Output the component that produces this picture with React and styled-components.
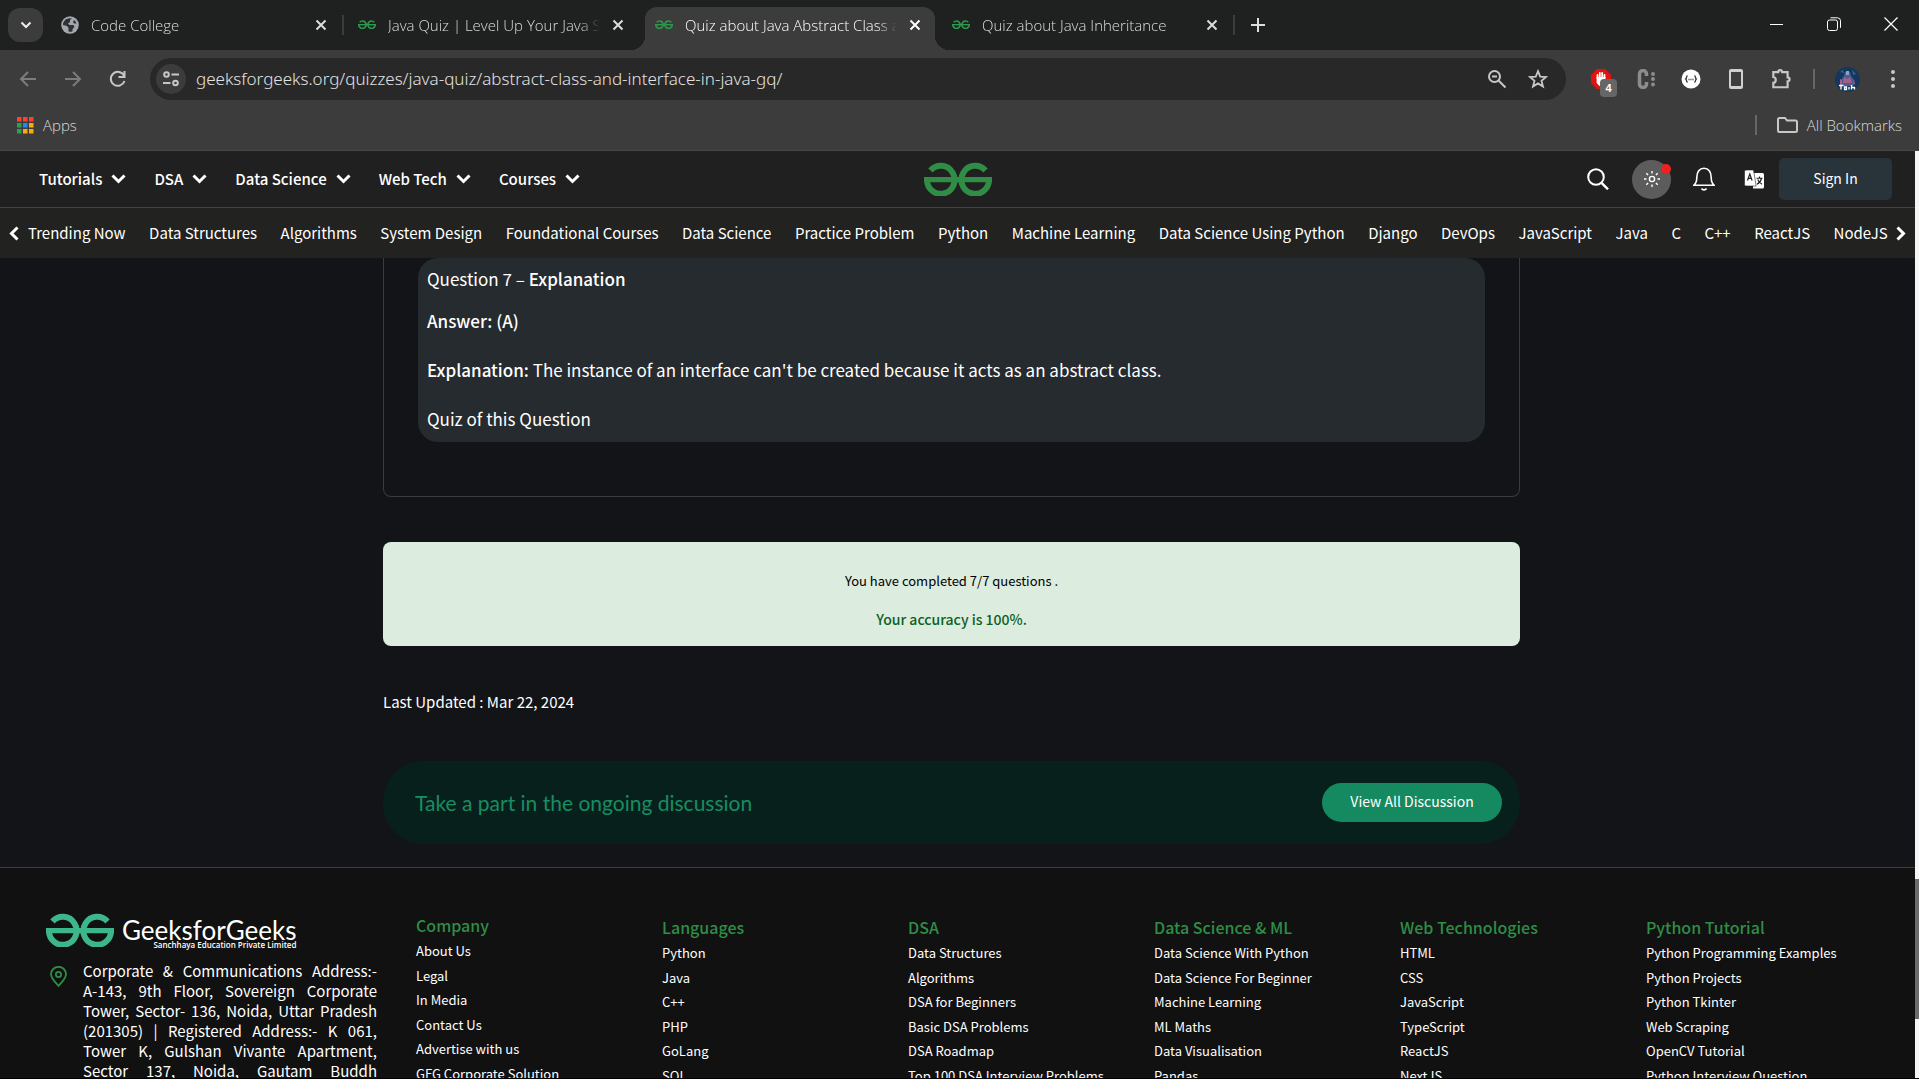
import React from "react";
import styled, { createGlobalStyle, css } from "styled-components";

const uiFont = `"Open Sans", "Noto Sans", sans-serif`;
const siteFont = `"Noto Sans CJK SC", "Noto Sans", sans-serif`;

const GlobalStyle = createGlobalStyle`
  *, *::before, *::after { box-sizing: border-box; }
  body { margin: 0; background: #131418; overflow: hidden; }
  button { border: 0; padding: 0; background: none; color: inherit; font: inherit; cursor: pointer; }
  a { color: inherit; text-decoration: none; }
  h2, p, ul { margin: 0; padding: 0; }
  ul { list-style: none; }
  svg { display: block; flex: none; }
`;

/* ---------- browser chrome ---------- */

const Window = styled.div`
  display: flex;
  flex-direction: column;
  height: 100vh;
  overflow: hidden;
  border-bottom: 1px solid #000;
  font-family: ${siteFont};
`;

const TabStrip = styled.div`
  display: flex;
  flex: none;
  height: 50px;
  padding-left: 8px;
  background: #1f2120;
  color: #dcdcdc;
  font: 300 15px/20px ${uiFont};
`;

const TabSearch = styled.button`
  display: grid;
  place-items: center;
  width: 35px;
  height: 34px;
  margin: 8px 8px 0 0;
  border-radius: 12px;
  background: #3c3c3c;
`;

const TabItem = styled.div`
  position: relative;
  display: flex;
  align-items: center;
  width: 290px;
  height: 43px;
  margin: 7px 7px 0 0;
  padding: 0 14px 8px 10px;
  border-radius: 12px 12px 0 0;
  ${(p) =>
    p.$active &&
    css`
      background: #3c3c3c;
      color: #fff;
      &::before,
      &::after {
        content: "";
        position: absolute;
        bottom: 0;
        width: 14px;
        height: 14px;
      }
      &::before {
        right: 100%;
        background: radial-gradient(circle at 0 0, transparent 14px, #3c3c3c 14px);
      }
      &::after {
        left: 100%;
        background: radial-gradient(circle at 100% 0, transparent 14px, #3c3c3c 14px);
      }
    `}
`;

const TabTitle = styled.span`
  flex: 1;
  margin: 0 12px;
  overflow: hidden;
  white-space: nowrap;
  mask-image: linear-gradient(90deg, #000 calc(100% - 20px), transparent);
`;

const Divider = styled.span`
  flex: none;
  align-self: center;
  width: 2px;
  height: 20px;
  background: ${(p) => p.$color || "#3c3c3c"};
  margin: ${(p) => p.$margin || "0"};
`;

const TabDivider = styled(Divider)`
  margin: 0 4px 0 -6px;
`;

const NewTab = styled.button`
  display: grid;
  place-items: center;
  width: 38px;
  height: 50px;
`;

const WindowControls = styled.div`
  display: flex;
  margin-left: auto;
`;

const WindowButton = styled.button`
  display: grid;
  place-items: center;
  width: 57px;
  height: 48px;
`;

const Toolbar = styled.div`
  display: flex;
  flex: none;
  align-items: center;
  padding: 8px 4px 1px 5px;
  background: #3c3c3c;
  color: #c7c7c7;
`;

const ToolButton = styled.button`
  position: relative;
  display: grid;
  place-items: center;
  width: ${(p) => (p.$narrow ? 41 : 45)}px;
  height: 40px;
  color: ${(p) => (p.$dim ? "#7c7c7c" : "inherit")};
`;

const AddressBar = styled.label`
  display: flex;
  flex: 1;
  align-items: center;
  height: 42px;
  margin: 0 12px 0 10px;
  padding: 0 8px 0 6px;
  border-radius: 21px;
  background: #282828;
`;

const SiteInfo = styled.button`
  display: grid;
  place-items: center;
  width: 30px;
  height: 30px;
  border-radius: 50%;
  background: #3c3c3c;
`;

const Address = styled.input`
  flex: 1;
  min-width: 0;
  margin-left: 10px;
  padding: 0;
  border: 0;
  outline: 0;
  background: none;
  color: #e2e2e2;
  font: 300 17px/24px "Noto Sans", sans-serif;
`;

const ExtensionCount = styled.span`
  position: absolute;
  left: 22px;
  top: 20px;
  width: 17px;
  height: 18px;
  border-radius: 4px;
  background: #666;
  color: #fff;
  font: 700 11px/18px "Liberation Sans", sans-serif;
  text-align: center;
`;

const Bookmarks = styled.div`
  display: flex;
  flex: none;
  align-items: center;
  justify-content: space-between;
  height: 50px;
  padding: 0 17px 1px;
  border-bottom: 1px solid #474747;
  background: #3c3c3c;
  color: #dadada;
  font: 300 15px/20px ${uiFont};
`;

const Bookmark = styled.button`
  display: flex;
  align-items: center;
  gap: 9px;
`;

const BookmarkGroup = styled.div`
  display: flex;
  align-items: center;
`;

/* ---------- site ---------- */

const Viewport = styled.div`
  display: flex;
  flex: 1;
  min-height: 0;
`;

const Page = styled.div`
  flex: 1;
  min-width: 0;
  overflow: hidden;
  background: #131418;
  color: #fff;
`;

const ScrollTrack = styled.div`
  flex: none;
  width: 4px;
  padding-top: 728px;
  background: #f6f6f6;
`;

const ScrollThumb = styled.div`
  height: 140px;
  background: #6c6c6c;
`;

const Header = styled.header`
  display: grid;
  grid-template-columns: 1fr auto 1fr;
  align-items: center;
  height: 57px;
  border-bottom: 1px solid #434346;
  background: #202020;
`;

const MainNav = styled.nav`
  display: flex;
  gap: 28px;
  padding-left: 39px;
`;

const MenuButton = styled.button`
  display: flex;
  align-items: center;
  gap: 9px;
  font-weight: 500;
  font-size: 15px;
  line-height: 24px;
`;

const HeaderTools = styled.div`
  display: flex;
  align-items: center;
  justify-content: flex-end;
  padding-right: 23px;
`;

const HeaderButton = styled.button`
  display: grid;
  place-items: center;
  width: 24px;
  height: 24px;
  margin-right: ${(p) => p.$gap}px;
`;

const ThemeToggle = styled.button`
  position: relative;
  display: grid;
  place-items: center;
  width: 39px;
  height: 39px;
  margin-right: 21px;
  border-radius: 50%;
  background: #5c5c5c;
`;

const Dot = styled.span`
  position: absolute;
  top: 4px;
  right: 0;
  width: 10px;
  height: 10px;
  border-radius: 50%;
  background: #ee2020;
`;

const SignIn = styled.button`
  width: 113px;
  height: 42px;
  padding-bottom: 3px;
  border-radius: 5px;
  background: #28333a;
  font-size: 14px;
  line-height: 20px;
`;

const SubNav = styled.nav`
  display: flex;
  align-items: center;
  height: 50px;
  padding: 0 9px;
  background: #222220;
`;

const SubLinks = styled.ul`
  display: flex;
  flex: 1;
  justify-content: space-between;
  margin: 0 8px 0 9px;
  font-size: 15px;
  line-height: 24px;
  white-space: nowrap;
`;

const Content = styled.main`
  max-width: 1137px;
  margin-left: 20%;
  padding-bottom: 23px;
`;

const QuestionCard = styled.section`
  padding: 0 34px 54px;
  border: 1px solid #3b3c40;
  border-top: 0;
  border-radius: 0 0 8px 8px;
`;

const Explanation = styled.div`
  display: flex;
  flex-direction: column;
  gap: 25px;
  padding: 9px 9px 11px;
  border-radius: 20px;
  background: #262b2f;
  font-size: 17px;
  line-height: 24px;

  b { font-weight: 500; }
`;

const ExplanationHead = styled.div`
  display: grid;
  gap: 18px;
`;

const Result = styled.section`
  display: grid;
  gap: 14px;
  margin-top: 45px;
  padding: 27px 0 15px;
  border-radius: 8px;
  background: #dcecdf;
  color: #000;
  font-size: 13px;
  line-height: 24px;
  text-align: center;
`;

const Accuracy = styled.p`
  color: #0c6122;
  font-weight: 500;
  font-size: 14px;
`;

const Updated = styled.p`
  margin: 44px 0 47px;
  font-size: 15px;
  line-height: 24px;
`;

const Discussion = styled.section`
  display: flex;
  align-items: center;
  justify-content: space-between;
  height: 83px;
  padding: 0 18px 0 32px;
  border-radius: 40px;
  background: #08201b;
  color: #178d63;
  font: 400 21px/28px Lato, sans-serif;
`;

const DiscussionButton = styled.button`
  width: 180px;
  height: 39px;
  padding-bottom: 4px;
  border-radius: 20px;
  background: #15895f;
  color: #fff;
  font: 400 14px/20px ${siteFont};
`;

const Footer = styled.footer`
  display: grid;
  grid-template-columns: 370px repeat(6, 1fr);
  padding: 45px 23px 0 46px;
  border-top: 1px solid #3b3c42;
  background: #111;
`;

const Brand = styled.div`
  display: flex;
  gap: 8px;
`;

const BrandText = styled.div`
  display: grid;
  justify-items: end;
  padding-top: 6px;
`;

const BrandName = styled.span`
  font: 400 26px/22px Lato, sans-serif;
`;

const BrandOwner = styled.span`
  font: 600 8px/8px "Open Sans", sans-serif;
`;

const Office = styled.div`
  display: flex;
  gap: 16px;
  width: 331px;
  margin-top: 12px;
  padding-left: 4px;
  font-size: 15px;
  line-height: 20px;
`;

const OfficeText = styled.p`
  flex: 1;
  text-align: justify;
`;

const NoBreak = styled.span`
  white-space: nowrap;
`;

const PinBox = styled.div`
  width: 17px;
  padding-top: 5px;
`;

const Column = styled.div`
  padding-top: ${(p) => (p.$first ? 0 : 2)}px;
`;

const ColumnTitle = styled.h2`
  margin-bottom: 2px;
  color: #2f8d46;
  font-weight: 500;
  font-size: 16px;
  line-height: 24px;
`;

const FooterLinks = styled.ul`
  display: grid;
  grid-auto-rows: 1fr;
  align-items: center;
  height: 147px;
  font-size: 13px;
  line-height: 24px;
  white-space: nowrap;
`;

/* ---------- drawings ---------- */

const Geeks = ({ width, color = "#2f8d46" }) => (
  <svg width={width} height={width / 2} viewBox="0 0 68 34" fill="none" stroke={color} strokeWidth="6">
    <path d="M61.500 8.500A13.800 14 0 1 0 65 18M6.500 8.500A13.800 14 0 1 1 3 18" />
    <path d="M0 17.700H68" strokeWidth="5.200" />
  </svg>
);

const Stroke = ({ size = 20, w = 2, children, ...rest }) => (
  <svg width={size} height={size} viewBox="0 0 20 20" fill="none" stroke="currentColor" strokeWidth={w} {...rest}>
    {children}
  </svg>
);

const CloseMark = () => (
  <svg width="12" height="12" viewBox="0 0 12 12" stroke="currentColor" strokeWidth="2"><path d="M1.500 1.500 10.500 10.500M10.500 1.500 1.500 10.500" /></svg>
);

const Globe = () => (
  <svg width="18" height="18" viewBox="0 0 18 18">
    <circle cx="9" cy="9" r="8.800" fill="#a2a8ae" />
    <path d="M9 2.200C5 2.200 2 5 2 9l4 1 1.500 2v3.500c1 .5 3 .3 4-.3v-2l2-2.200-1-2H8.500L7 7.500 9 6V4l2-1.500zM13 4l-1 2 1 1.500h2.500C15 6 14.200 4.800 13 4z" fill="#303335" />
  </svg>
);

const Chevron = ({ turn = 0 }) => (
  <svg width={turn ? 10 : 15} height={turn ? 15 : 10} viewBox={turn ? "0 0 10 15" : "0 0 15 10"} fill="none" stroke="#fff" strokeWidth="3">
    <path d={turn === 1 ? "M8.500 1.500 2.500 7.500l6 6" : turn === 2 ? "M1.500 1.500l6 6-6 6" : "M1.500 1.500l6 6 6-6"} />
  </svg>
);

const AppsIcon = () => (
  <svg width="17" height="17" viewBox="0 0 17 17">
    {["#ff4131", "#ff4131", "#ff4131", "#2ba24c", "#1e88f5", "#fbab06", "#2ba24c", "#fbab06", "#fbab06"].map((c, i) => (
      <rect key={i} x={(i % 3) * 6} y={Math.floor(i / 3) * 6} width="4.500" height="4.500" fill={c} />
    ))}
  </svg>
);

const Pin = () => (
  <svg width="17" height="21" viewBox="0 0 17 21" fill="none" stroke="#2f8d46" strokeWidth="1.800">
    <path d="M8.500 19.800C5 16 1 12.500 1 8.300a7.500 7.500 0 0 1 15 0c0 4.200-4 7.700-7.500 11.500z" />
    <circle cx="8.500" cy="8.500" r="2.600" />
  </svg>
);

const Translate = () => (
  <svg width="21" height="21" viewBox="0 0 21 21">
    <path d="M9 4h9.500a1.500 1.500 0 0 1 1.500 1.500v12.500a1.500 1.500 0 0 1-1.500 1.500H9z" fill="#fff" />
    <path d="M12.500 9.200h6M15.500 7.500v1.700M17.500 9.500c-.6 2.500-2.300 4.500-4.500 5.700M13.700 10.500c.8 2 2.300 3.500 4.300 4.700" fill="none" stroke="#202020" strokeWidth="1.100" />
    <path d="M2 1h7.500l2.700 16H2A1.500 1.500 0 0 1 .5 15.500v-13A1.500 1.500 0 0 1 2 1z" fill="#fff" stroke="#202020" strokeWidth=".6" />
    <path d="M3.500 11.500 5.800 5l2.300 6.500M4.300 9.400h3" fill="none" stroke="#202020" strokeWidth="1.200" />
  </svg>
);

const Avatar = () => (
  <svg width="25" height="25" viewBox="0 0 25 25">
    <circle cx="12.500" cy="12.500" r="12.500" fill="#14375c" />
    <path d="M5 5l3-2 1 3zM17 3l4 4-3 1z" fill="#1f6f8c" />
    <path d="M10 5h5l1 4 3 4-1 6H7L6 13l3-4z" fill="#4d5c96" />
    <path d="M9 10l3 2 3-2 2 6H8zM5 12l2 1v5H5zM19 12l1 5-2 1z" fill="#a55f86" />
    <path d="M11 4h3v4h-3z" fill="#8da0bd" />
    <path d="M4 18.500h4.500M6 18.500v4M9.500 20v2.500h2V20zM14 20v2.500M16.500 18v4.500M16.500 20.500h3v2" stroke="#fff" strokeWidth="1.300" fill="none" />
  </svg>
);

/* ---------- data ---------- */

const tabs = [
  { title: "Code College", globe: true },
  { title: "Java Quiz | Level Up Your Java Skills" },
  { title: "Quiz about Java Abstract Class and Interface", active: true },
  { title: "Quiz about Java Inheritance" },
];

const menus = ["Tutorials", "DSA", "Data Science", "Web Tech", "Courses"];

const topics = [
  "Trending Now", "Data Structures", "Algorithms", "System Design", "Foundational Courses", "Data Science",
  "Practice Problem", "Python", "Machine Learning", "Data Science Using Python", "Django", "DevOps",
  "JavaScript", "Java", "C", "C++", "ReactJS", "NodeJS",
];

const footerColumns = [
  ["Company", "About Us", "Legal", "In Media", "Contact Us", "Advertise with us", "GFG Corporate Solution"],
  ["Languages", "Python", "Java", "C++", "PHP", "GoLang", "SQL"],
  ["DSA", "Data Structures", "Algorithms", "DSA for Beginners", "Basic DSA Problems", "DSA Roadmap", "Top 100 DSA Interview Problems"],
  ["Data Science & ML", "Data Science With Python", "Data Science For Beginner", "Machine Learning", "ML Maths", "Data Visualisation", "Pandas"],
  ["Web Technologies", "HTML", "CSS", "JavaScript", "TypeScript", "ReactJS", "NextJS"],
  ["Python Tutorial", "Python Programming Examples", "Python Projects", "Python Tkinter", "Web Scraping", "OpenCV Tutorial", "Python Interview Question"],
];

/* ---------- sections ---------- */

function BrowserChrome() {
  return (
    <>
      <TabStrip>
        <TabSearch aria-label="Search tabs">
          <svg width="12" height="8" viewBox="0 0 12 8" fill="none" stroke="#eee" strokeWidth="2"><path d="M1.500 1.500 6 6l4.500-4.500" /></svg>
        </TabSearch>
        {tabs.map((t, i) => (
          <React.Fragment key={t.title}>
            <TabItem $active={t.active}>
              {t.globe ? <Globe /> : <Geeks width={18} color="#2b9a4c" />}
              <TabTitle>{t.title}</TabTitle>
              <button aria-label={`Close ${t.title}`}><CloseMark /></button>
            </TabItem>
            {(i === 0 || i === 3) && <TabDivider />}
          </React.Fragment>
        ))}
        <NewTab aria-label="New tab">
          <svg width="14" height="14" viewBox="0 0 14 14" stroke="#ddd" strokeWidth="2"><path d="M7 0v14M0 7h14" /></svg>
        </NewTab>
        <WindowControls>
          <WindowButton aria-label="Minimize">
            <svg width="13" height="13" viewBox="0 0 13 13" stroke="#fff"><path d="M0 6.500h13" /></svg>
          </WindowButton>
          <WindowButton aria-label="Restore">
            <svg width="14" height="14" viewBox="0 0 14 14" fill="none" stroke="#fff"><rect x=".5" y="3" width="10" height="10.500" rx="2" /><path d="M3.500.8h7a3 3 0 0 1 3 3v7" /></svg>
          </WindowButton>
          <WindowButton aria-label="Close window">
            <svg width="14" height="14" viewBox="0 0 14 14" stroke="#fff" strokeWidth="1.200"><path d="M.5.5l13 13M13.500.5l-13 13" /></svg>
          </WindowButton>
        </WindowControls>
      </TabStrip>

      <Toolbar>
        <ToolButton $dim aria-label="Back"><Stroke><path d="M18 10H3M10 3l-7 7 7 7" /></Stroke></ToolButton>
        <ToolButton $dim aria-label="Forward"><Stroke><path d="M2 10h15M10 3l7 7-7 7" /></Stroke></ToolButton>
        <ToolButton aria-label="Reload"><Stroke><path d="M16 6.500A7 7 0 1 0 16.500 12M16.500 2v6h-6" /></Stroke></ToolButton>
        <AddressBar>
          <SiteInfo aria-label="Site information">
            <Stroke><circle cx="5.500" cy="5.500" r="2.300" /><path d="M10.500 5.500H18M2 14h7.500" /><circle cx="14.500" cy="14" r="2.300" /></Stroke>
          </SiteInfo>
          <Address aria-label="Address" defaultValue="geeksforgeeks.org/quizzes/java-quiz/abstract-class-and-interface-in-java-gq/" />
          <ToolButton $narrow aria-label="Zoom">
            <Stroke><circle cx="7.500" cy="7.500" r="5.500" /><path d="M11.500 11.500 18.500 18.500M5 7.500h5" /></Stroke>
          </ToolButton>
          <ToolButton $narrow aria-label="Bookmark this tab">
            <Stroke w={1.8}><path d="M10 2.200l2.200 5.400 5.800.4-4.500 3.800 1.500 5.700L10 14.400l-5 3.100 1.500-5.700L2 8l5.800-.4z" /></Stroke>
          </ToolButton>
        </AddressBar>
        <ToolButton aria-label="Ad blocker">
          <svg width="20" height="20" viewBox="0 0 20 20">
            <path d="M6 0h8l6 6v8l-6 6H6l-6-6V6z" fill="#e8100c" />
            <path d="M6.500 9V6M8.800 8V4M11.200 8V4M13.500 9V6" stroke="#fff" strokeWidth="1.800" strokeLinecap="round" />
            <path d="M5.600 8h8.800v5l-2 4H8.500l-2.900-3z" fill="#fff" />
          </svg>
          <ExtensionCount>4</ExtensionCount>
        </ToolButton>
        <ToolButton aria-label="Code extension">
          <svg width="20" height="20" viewBox="0 0 20 20" fill="none" stroke="#8c8c8c" strokeWidth="3.500">
            <path d="M10.500 7V5A3.500 3.500 0 0 0 3.500 5V15A3.500 3.500 0 0 0 10.500 15V13" />
            <g fill="#8c8c8c" stroke="none"><circle cx="17" cy="5" r="2" /><circle cx="17" cy="10" r="2" /><circle cx="17" cy="15.500" r="2" /></g>
          </svg>
        </ToolButton>
        <ToolButton aria-label="JSON extension">
          <Stroke w={1.3} color="#333"><circle cx="10" cy="10" r="9.500" fill="#fff" stroke="none" /><path d="M6.500 6.500C5 7.500 6 9 4.700 10 6 11 5 12.500 6.500 13.500M13.500 6.500c1.500 1 .5 2.500 1.800 3.500-1.300 1-.3 2.500-1.800 3.500" /><path d="M7.500 10.500h5" strokeDasharray="1 1" /></Stroke>
        </ToolButton>
        <ToolButton aria-label="Device view">
          <svg width="14" height="20" viewBox="0 0 14 20"><rect width="14" height="20" rx="2" fill="#d0d0d0" /><rect x="2" y="3" width="10" height="14" fill="#3c3c3c" /></svg>
        </ToolButton>
        <ToolButton aria-label="Extensions">
          <Stroke size={22}><path d="M3 3.800h4.500a1.800 1.800 0 0 1 3.600 0H16v4.700a1.800 1.800 0 0 1 0 3.600V17.500H3v-4c3-.3 3-5 0-5.300z" /></Stroke>
        </ToolButton>
        <Divider $color="#666" $margin="0 10px" />
        <ToolButton aria-label="Profile"><Avatar /></ToolButton>
        <ToolButton aria-label="Menu">
          <svg width="4" height="18" viewBox="0 0 4 18" fill="currentColor"><circle cx="2" cy="2" r="2" /><circle cx="2" cy="9" r="2" /><circle cx="2" cy="16" r="2" /></svg>
        </ToolButton>
      </Toolbar>

      <Bookmarks>
        <Bookmark><AppsIcon />Apps</Bookmark>
        <BookmarkGroup>
          <Divider $color="#666" $margin="0 20px 0 0" />
          <Bookmark>
            <svg width="21" height="16" viewBox="0 0 21 16" fill="none" stroke="#c7c7c7" strokeWidth="2"><path d="M1 2.500A1.500 1.500 0 0 1 2.500 1H8l2 2.500h8.500A1.500 1.500 0 0 1 20 5v8.500a1.500 1.500 0 0 1-1.500 1.500h-16A1.500 1.500 0 0 1 1 13.500z" /></svg>
            All Bookmarks
          </Bookmark>
        </BookmarkGroup>
      </Bookmarks>
    </>
  );
}

function SiteHeader() {
  return (
    <>
      <Header>
        <MainNav>
          {menus.map((m) => (
            <MenuButton key={m}>{m}<Chevron /></MenuButton>
          ))}
        </MainNav>
        <a href="#home" aria-label="GeeksforGeeks home"><Geeks width={68} /></a>
        <HeaderTools>
          <HeaderButton $gap={22} aria-label="Search">
            <svg width="22" height="22" viewBox="0 0 22 22" fill="none" stroke="#fff" strokeWidth="2"><circle cx="9" cy="9" r="7.800" /><path d="M14.500 14.800 21 21.300" strokeWidth="2.400" /></svg>
          </HeaderButton>
          <ThemeToggle aria-label="Toggle theme">
            <svg width="16" height="16" viewBox="0 0 16 16" fill="none" stroke="#fff" strokeWidth="1.400">
              <circle cx="8" cy="8" r="2.600" />
              <path d="M8 0v2.500M8 13.500V16M0 8h2.500M13.500 8H16M2.300 2.300l1.800 1.800M11.900 11.900l1.800 1.800M2.300 13.700l1.800-1.800M11.900 4.100l1.800-1.800" />
            </svg>
            <Dot />
          </ThemeToggle>
          <HeaderButton $gap={26} aria-label="Notifications">
            <svg width="22" height="24" viewBox="0 0 22 24" fill="none" stroke="#fff" strokeWidth="1.600">
              <path d="M1 18.200h20c-2-1.700-2.800-3.500-2.800-7.700C18.200 5 15.500 1.300 11 1.300S3.800 5 3.800 10.500c0 4.200-.8 6-2.800 7.700z" />
              <path d="M8.500 21.500c1 1.800 4 1.800 5 0" />
            </svg>
          </HeaderButton>
          <HeaderButton $gap={13} aria-label="Translate"><Translate /></HeaderButton>
          <SignIn>Sign In</SignIn>
        </HeaderTools>
      </Header>
      <SubNav>
        <button aria-label="Previous topics"><Chevron turn={1} /></button>
        <SubLinks>
          {topics.map((t) => (
            <li key={t}><a href="#topic">{t}</a></li>
          ))}
        </SubLinks>
        <button aria-label="More topics"><Chevron turn={2} /></button>
      </SubNav>
    </>
  );
}

function SiteFooter() {
  return (
    <Footer>
      <div>
        <Brand>
          <Geeks width={68} color="#3cb68a" />
          <BrandText>
            <BrandName>GeeksforGeeks</BrandName>
            <BrandOwner>Sanchhaya Education Private Limited</BrandOwner>
          </BrandText>
        </Brand>
        <Office>
          <PinBox><Pin /></PinBox>
          <OfficeText>
            Corporate &amp; Communications Address:- <NoBreak>A-143,</NoBreak> 9th Floor, Sovereign Corporate Tower,
            Sector- 136, Noida, Uttar Pradesh (201305) | Registered Address:- K 061, Tower K, Gulshan Vivante Apartment,
            Sector 137, Noida, Gautam Buddh <NoBreak>Nagar, Uttar Pradesh</NoBreak>
          </OfficeText>
        </Office>
      </div>
      {footerColumns.map(([title, ...links], i) => (
        <Column key={title} $first={i === 0}>
          <ColumnTitle>{title}</ColumnTitle>
          <FooterLinks>
            {links.map((l) => (
              <li key={l}><a href="#link">{l}</a></li>
            ))}
          </FooterLinks>
        </Column>
      ))}
    </Footer>
  );
}

export default function App() {
  return (
    <Window>
      <GlobalStyle />
      <BrowserChrome />
      <Viewport>
        <Page>
          <SiteHeader />
          <Content>
            <QuestionCard>
              <Explanation>
                <ExplanationHead>
                  <p>Question 7 – <b>Explanation</b></p>
                  <p><b>Answer: (A)</b></p>
                </ExplanationHead>
                <p><b>Explanation:</b> The instance of an interface can't be created because it acts as an abstract class.</p>
                <p>Quiz of this Question</p>
              </Explanation>
            </QuestionCard>
            <Result>
              <p>You have completed 7/7 questions .</p>
              <Accuracy>Your accuracy is 100%.</Accuracy>
            </Result>
            <Updated>Last Updated : Mar 22, 2024</Updated>
            <Discussion>
              <p>Take a part in the ongoing discussion</p>
              <DiscussionButton>View All Discussion</DiscussionButton>
            </Discussion>
          </Content>
          <SiteFooter />
        </Page>
        <ScrollTrack><ScrollThumb /></ScrollTrack>
      </Viewport>
    </Window>
  );
}
